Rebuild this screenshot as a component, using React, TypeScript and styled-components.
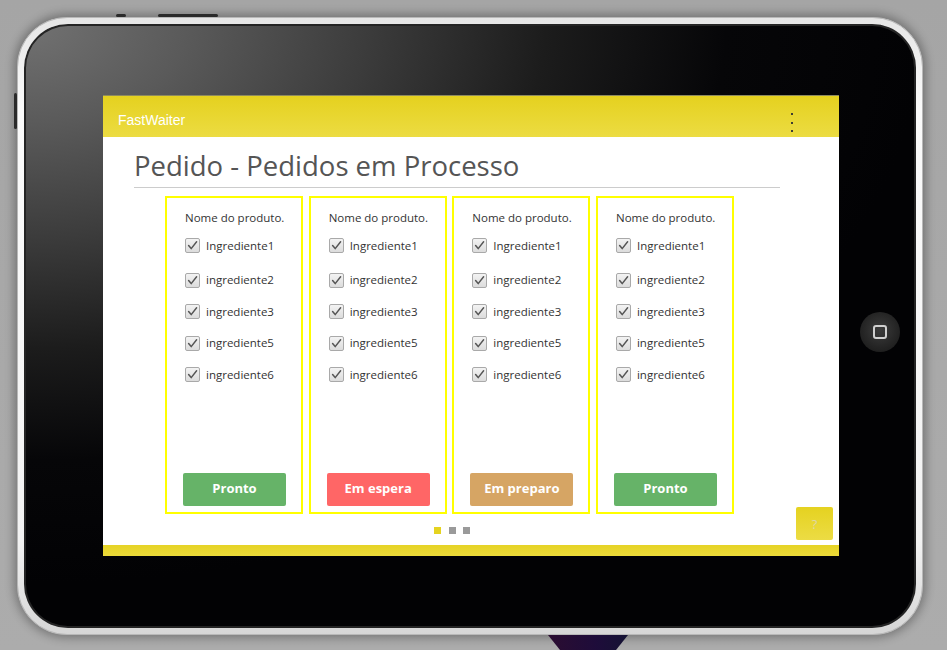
import React from "react";
import styled, { createGlobalStyle } from "styled-components";

const GlobalStyle = createGlobalStyle`
  html, body { margin: 0; padding: 0; background: #a9a9a9; }
  body { font-family: "Open Sans", "Liberation Sans", sans-serif; }
  * { box-sizing: border-box; }
`;

const Page = styled.div`
  width: 947px;
  height: 650px;
  overflow: hidden;
  padding: 17px 0 0 17px;
  background: linear-gradient(180deg, #a5a5a5 0%, #acacac 100%);
`;

const Device = styled.div`
  position: relative;
  width: 906px;
  height: 618px;
  border-radius: 50px;
  padding: 6px;
  border: 1px solid #b8b8b8;
  background: linear-gradient(180deg, #e6e6e6 0%, #fbfbfb 15%, #f2f2f2 85%, #d6d6d6 100%);
  box-shadow: 0 0 10px 3px rgba(0, 0, 0, 0.3);
`;

const SideButton = styled.span<{ $left?: number; $top?: number; $w: number; $h: number }>`
  position: absolute;
  left: ${(p) => (p.$left !== undefined ? `${p.$left}px` : "auto")};
  top: ${(p) => (p.$top !== undefined ? `${p.$top}px` : "auto")};
  width: ${(p) => p.$w}px;
  height: ${(p) => p.$h}px;
  background: #2a2a2a;
  border-radius: 2px;
`;

const Bezel = styled.div`
  width: 100%;
  height: 100%;
  border-radius: 44px;
  display: flex;
  align-items: flex-start;
  padding: 71px 0 0 79px;
  background:
    radial-gradient(ellipse 900px 560px at 0 0, #727272 0%, #5a5a5a 18%, #3c3c3c 38%, #1c1c1c 58%, #060608 78%, rgba(2, 2, 4, 0) 100%),
    #020204;
  box-shadow: inset 0 0 0 2px #242424;
`;

const Screen = styled.div`
  width: 736px;
  height: 461px;
  display: flex;
  flex-direction: column;
  background: #ffffff;
`;

const HomeButton = styled.div`
  margin: 217px 0 0 21px;
  width: 40px;
  height: 40px;
  border-radius: 50%;
  background: radial-gradient(circle at 50% 45%, #3c3c3c 0%, #262626 55%, #151515 100%);
  display: flex;
  align-items: center;
  justify-content: center;
`;

const HomeSquare = styled.span`
  width: 14px;
  height: 14px;
  border: 2px solid #cfcfcf;
  border-radius: 3px;
`;

const Trapezoid = styled.div`
  margin-left: 531px;
  width: 80px;
  height: 15px;
  background: linear-gradient(90deg, #2b0d31 0%, #1e0c3a 60%, #141233 100%);
  clip-path: polygon(0 0, 100% 0, 85% 100%, 15% 100%);
`;

const AppBar = styled.header`
  height: 42px;
  border-top: 1px solid #8e8a5e;
  background: linear-gradient(180deg, #e5d11f 0%, #ecdc42 100%);
  display: flex;
  justify-content: space-between;
  align-items: flex-start;
  padding: 16px 46px 0 15px;
`;

const AppName = styled.span`
  font-family: "Liberation Sans", Arial, sans-serif;
  font-size: 14px;
  line-height: 16px;
  color: #ffffff;
`;

const MenuDots = styled.div`
  display: flex;
  flex-direction: column;
  gap: 6.5px;
  padding-top: 1px;
`;

const MenuDot = styled.span`
  width: 2px;
  height: 2px;
  background: #3d3d33;
`;

const Main = styled.main`
  position: relative;
  flex: 1;
  padding: 10px 0 0 31px;
`;

const Title = styled.h1`
  margin: 0;
  width: 646px;
  padding-bottom: 2px;
  border-bottom: 1px solid #cccccc;
  font-family: "Open Sans", sans-serif;
  font-weight: 400;
  font-size: 27.5px;
  line-height: 38px;
  color: #555555;
`;

const Board = styled.div`
  margin: 8px 0 0 31px;
  width: 569px;
  display: flex;
  flex-direction: column;
`;

const CardRow = styled.div`
  display: flex;
  gap: 5.67px;
`;

const Card = styled.section`
  width: 138px;
  height: 318px;
  border: 2px solid #ffff00;
  padding: 12px 0 6px 18px;
  display: flex;
  flex-direction: column;
`;

const ProductName = styled.div`
  font-size: 11.5px;
  line-height: 16px;
  color: #333333;
`;

const IngredientList = styled.ul`
  list-style: none;
  margin: 12px 0 0;
  padding: 0;
  display: flex;
  flex-direction: column;
  gap: 16.5px;
`;

const Ingredient = styled.li`
  display: flex;
  align-items: center;
  height: 15px;
  &:first-child {
    margin-bottom: 3px;
  }
`;

const Box = styled.span`
  width: 15px;
  height: 15px;
  flex: none;
  border: 1px solid #a9a9a9;
  border-radius: 2px;
  background: linear-gradient(180deg, #f3f3f3 0%, #dcdcdc 100%);
  display: flex;
  align-items: center;
  justify-content: center;
`;

const Label = styled.span`
  margin-left: 6px;
  font-size: 11.5px;
  line-height: 16px;
  color: #333333;
`;

const toneColors = {
  ready: "#66b368",
  waiting: "#ff6666",
  preparing: "#d6a564",
} as const;

type Tone = keyof typeof toneColors;

const StatusButton = styled.button<{ $tone: Tone }>`
  margin: auto 0 0 -2px;
  width: 103px;
  height: 33px;
  border: none;
  border-radius: 2px;
  background: ${(p) => toneColors[p.$tone]};
  color: #ffffff;
  font-family: "Open Sans", sans-serif;
  font-weight: 700;
  font-size: 13px;
  line-height: 30px;
  padding: 0 0 3px;
`;

const Pager = styled.div`
  margin-top: 13px;
  padding-left: 5px;
  display: flex;
  justify-content: center;
  gap: 7.5px;
`;

const PagerDot = styled.span<{ $active?: boolean }>`
  width: 7px;
  height: 7px;
  background: ${(p) => (p.$active ? "#e5d320" : "#9a9a9a")};
`;

const HelpButton = styled.button`
  position: absolute;
  right: 6px;
  bottom: 5px;
  width: 37px;
  height: 33px;
  border: none;
  border-radius: 2px;
  background: linear-gradient(180deg, #e5d220 0%, #ecdc44 100%);
  color: #dcd7a8;
  font-family: "Open Sans", sans-serif;
  font-size: 13px;
  padding: 0;
`;

const BottomBar = styled.footer`
  height: 11px;
  background: linear-gradient(180deg, #e6d325 0%, #ebda3a 100%);
`;

const Check = () => (
  <svg width="11" height="11" viewBox="0 0 11 11">
    <path d="M1.6 5.6 L4.2 8.6 L9.6 1.8" fill="none" stroke="#555555" strokeWidth="1.5" strokeLinecap="round" strokeLinejoin="round" />
  </svg>
);

const ingredients = ["Ingrediente1", "ingrediente2", "ingrediente3", "ingrediente5", "ingrediente6"];

const orders: { status: string; tone: Tone }[] = [
  { status: "Pronto", tone: "ready" },
  { status: "Em espera", tone: "waiting" },
  { status: "Em preparo", tone: "preparing" },
  { status: "Pronto", tone: "ready" },
];

export default function App() {
  return (
    <>
      <GlobalStyle />
      <Page>
        <Device>
          <SideButton $left={98} $top={-4} $w={10} $h={3} />
          <SideButton $left={140} $top={-4} $w={60} $h={3} />
          <SideButton $left={-4} $top={75} $w={3} $h={36} />
          <Bezel>
            <Screen>
              <AppBar>
                <AppName>FastWaiter</AppName>
                <MenuDots>
                  <MenuDot />
                  <MenuDot />
                  <MenuDot />
                </MenuDots>
              </AppBar>
              <Main>
                <Title>Pedido - Pedidos em Processo</Title>
                <Board>
                  <CardRow>
                    {orders.map((o, i) => (
                      <Card key={i}>
                        <ProductName>Nome do produto.</ProductName>
                        <IngredientList>
                          {ingredients.map((ing) => (
                            <Ingredient key={ing}>
                              <Box>
                                <Check />
                              </Box>
                              <Label>{ing}</Label>
                            </Ingredient>
                          ))}
                        </IngredientList>
                        <StatusButton $tone={o.tone}>{o.status}</StatusButton>
                      </Card>
                    ))}
                  </CardRow>
                  <Pager>
                    <PagerDot $active />
                    <PagerDot />
                    <PagerDot />
                  </Pager>
                </Board>
                <HelpButton>?</HelpButton>
              </Main>
              <BottomBar />
            </Screen>
            <HomeButton>
              <HomeSquare />
            </HomeButton>
          </Bezel>
        </Device>
        <Trapezoid />
      </Page>
    </>
  );
}
